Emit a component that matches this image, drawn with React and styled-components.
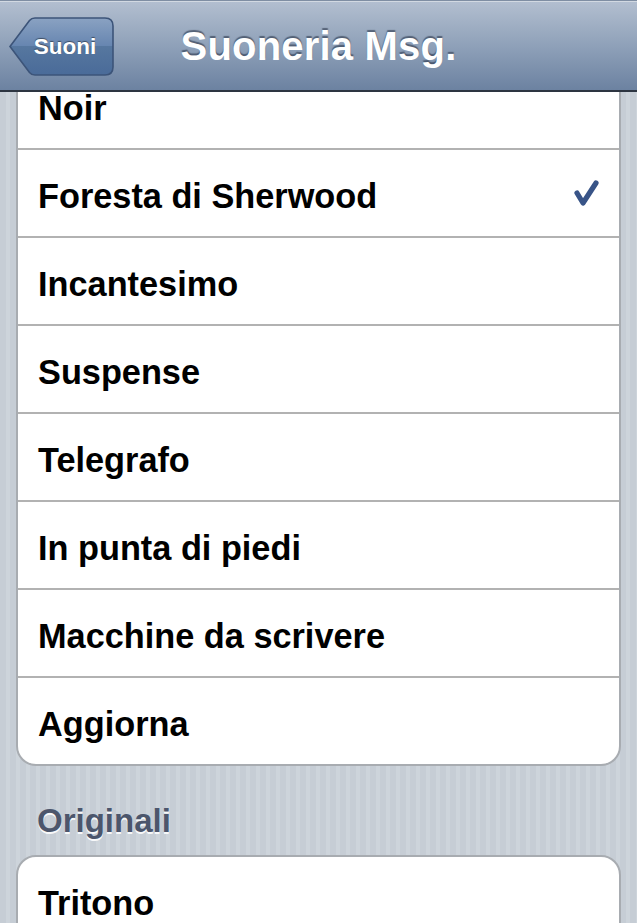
import React from 'react'
import styled, { createGlobalStyle } from 'styled-components'

const tones = [
  'Noir',
  'Foresta di Sherwood',
  'Incantesimo',
  'Suspense',
  'Telegrafo',
  'In punta di piedi',
  'Macchine da scrivere',
  'Aggiorna',
]

const originals = ['Tritono', 'Campanelli', 'Vetro']

function Check() {
  return (
    <CheckIcon viewBox="0 0 26 28" width="26" height="28">
      <polyline points="4,14 10,24 23,4" />
    </CheckIcon>
  )
}

function BackButton({ label }) {
  return (
    <Back>
      <BackShape viewBox="0 0 106 59" preserveAspectRatio="none">
        <defs>
          <linearGradient id="backFill" x1="0" y1="0" x2="0" y2="1">
            <stop offset="0" stopColor="#8aa2c2" />
            <stop offset="0.5" stopColor="#6685b0" />
            <stop offset="0.5" stopColor="#56779f" />
            <stop offset="1" stopColor="#4a6b99" />
          </linearGradient>
        </defs>
        <path
          d="M2 29.5 L21.5 3.5 Q23.5 1 27 1 H97 Q105 1 105 9 V50 Q105 58 97 58 H27 Q23.5 58 21.5 55.5 Z"
          fill="url(#backFill)"
          stroke="#3c5479"
          strokeWidth="1.6"
        />
      </BackShape>
      <BackLabel>{label}</BackLabel>
    </Back>
  )
}

function App() {
  return (
    <>
      <GlobalStyle />
      <Screen>
        <NavBar>
          <BackButton label="Suoni" />
          <Title>Suoneria Msg.</Title>
        </NavBar>
        <Content>
          <Group $offset={-32}>
            {tones.map((name) => (
              <Row key={name}>
                <Label>{name}</Label>
                {name === 'Foresta di Sherwood' && <Check />}
              </Row>
            ))}
          </Group>
          <SectionHeader>Originali</SectionHeader>
          <Group>
            {originals.map((name) => (
              <Row key={name}>
                <Label>{name}</Label>
              </Row>
            ))}
          </Group>
        </Content>
      </Screen>
    </>
  )
}

export default App

const GlobalStyle = createGlobalStyle`
  html, body {
    margin: 0;
    padding: 0;
  }
  body {
    font-family: "Liberation Sans", Arial, sans-serif;
    background: #c6cdd5;
  }
`

const Screen = styled.div`
  width: 637px;
  height: 923px;
  display: flex;
  flex-direction: column;
  overflow: hidden;
  background: repeating-linear-gradient(
    90deg,
    #c6cdd5 0px,
    #c6cdd5 6px,
    #cdd4db 6px,
    #cdd4db 10px
  );
`

const NavBar = styled.div`
  flex: 0 0 auto;
  height: 87px;
  display: grid;
  grid-template-columns: 1fr auto 1fr;
  align-items: center;
  padding: 2px 8px 0;
  border-top: 1px solid #7f8ea3;
  border-bottom: 2px solid #2d3541;
  box-shadow: inset 0 1px 0 #d2d9e2;
  background: linear-gradient(#b3bfd0 0%, #8fa1b9 50%, #6c82a1 100%);
  position: relative;
  z-index: 1;
`

const Back = styled.div`
  justify-self: start;
  position: relative;
  width: 106px;
  height: 59px;
  display: flex;
  align-items: center;
  justify-content: center;
  padding-left: 8px;
  box-sizing: border-box;
`

const BackShape = styled.svg`
  position: absolute;
  inset: 0;
  width: 100%;
  height: 100%;
`

const BackLabel = styled.span`
  position: relative;
  color: #fff;
  font-weight: bold;
  font-size: 22.5px;
  text-shadow: 0 -1px 1px rgba(0, 0, 0, 0.45);
`

const Title = styled.h1`
  margin: 0;
  color: #fff;
  font-weight: bold;
  font-size: 40px;
  letter-spacing: 0.2px;
  text-shadow: 0 -2px 1px rgba(30, 40, 60, 0.55);
  white-space: nowrap;
`

const Content = styled.div`
  flex: 1;
  overflow: hidden;
  padding: 0 16px;
`

const Group = styled.div`
  margin-top: ${(p) => (p.$offset ? `${p.$offset}px` : '0')};
  background: #fff;
  border: 2px solid #a8acb1;
  border-radius: 20px;
  overflow: hidden;
`

const Row = styled.div`
  height: 86px;
  display: flex;
  align-items: center;
  justify-content: space-between;
  padding: 0 20px 0 20px;
  border-bottom: 2px solid #b2b2b2;

  &:last-child {
    border-bottom: none;
  }
`

const Label = styled.span`
  margin-top: 6px;
  font-size: 34.3px;
  font-weight: bold;
  color: #000;
`

const CheckIcon = styled.svg`
  fill: none;
  stroke: #385487;
  stroke-width: 5.2;
  stroke-linecap: round;
  stroke-linejoin: round;
`

const SectionHeader = styled.div`
  margin: 35px 0 14px;
  padding-left: 21px;
  height: 40px;
  line-height: 40px;
  font-size: 33px;
  font-weight: bold;
  color: #4c566c;
  text-shadow: 0 2px 0 rgba(255, 255, 255, 0.9);
`
